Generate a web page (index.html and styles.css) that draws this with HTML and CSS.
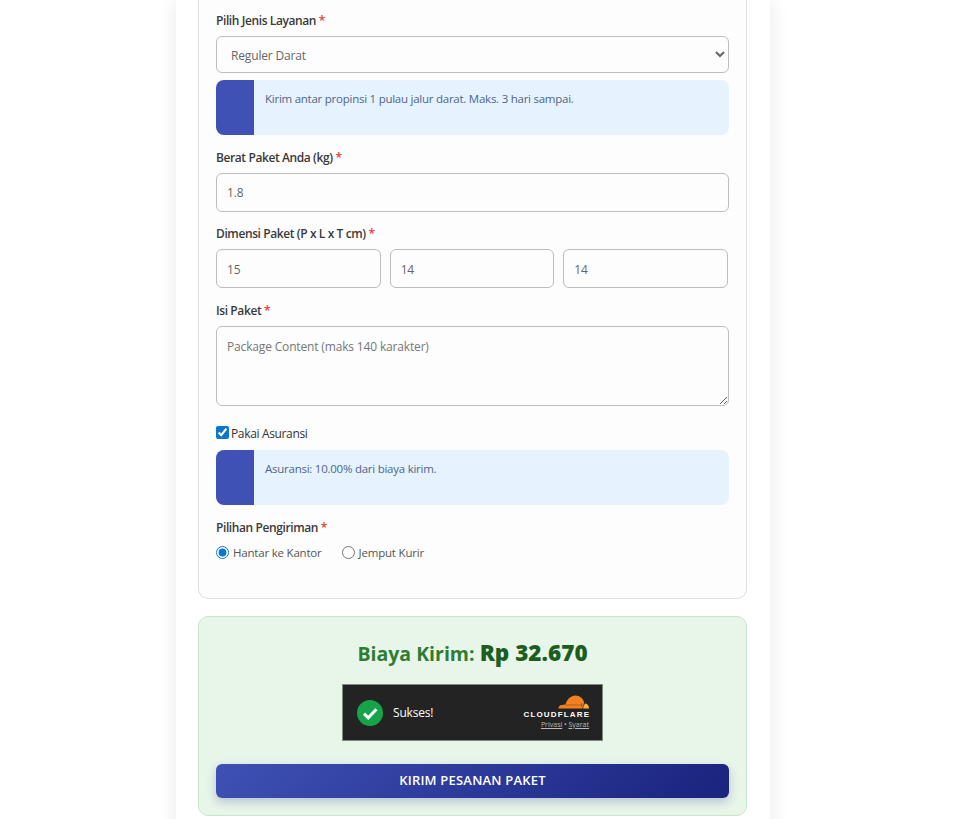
FILE: index.html
```html
<!DOCTYPE html>
<html lang="id">
<head>
<meta charset="utf-8">
<title>Kirim Paket</title>
<link rel="stylesheet" href="styles.css">
</head>
<body>
<div class="page">
  <main class="sheet">
    <form class="card">
      <label class="lbl" for="layanan">Pilih Jenis Layanan <span class="req">*</span></label>
      <select class="field sel" id="layanan"><option>Reguler Darat</option></select>
      <div class="info">Kirim antar propinsi 1 pulau jalur darat. Maks. 3 hari sampai.</div>

      <label class="lbl gap" for="berat">Berat Paket Anda (kg) <span class="req">*</span></label>
      <input class="field" id="berat" type="text" value="1.8">

      <label class="lbl gap">Dimensi Paket (P x L x T cm) <span class="req">*</span></label>
      <div class="dims">
        <input class="field" type="text" value="15">
        <input class="field" type="text" value="14">
        <input class="field" type="text" value="14">
      </div>

      <label class="lbl gap" for="isi">Isi Paket <span class="req">*</span></label>
      <textarea class="field area" id="isi" placeholder="Package Content (maks 140 karakter)"></textarea>

      <label class="check"><input type="checkbox" checked><span class="check-text">Pakai Asuransi</span></label>
      <div class="info info-after">Asuransi: 10.00% dari biaya kirim.</div>

      <div class="lbl gap">Pilihan Pengiriman <span class="req">*</span></div>
      <div class="radios">
        <label class="radio"><input type="radio" name="kirim" checked>Hantar ke Kantor</label>
        <label class="radio"><input type="radio" name="kirim">Jemput Kurir</label>
      </div>
    </form>

    <section class="total">
      <h2 class="cost">Biaya Kirim: <strong>Rp 32.670</strong></h2>
      <div class="turnstile">
        <svg class="ok" viewBox="0 0 26 26" width="26" height="26" aria-hidden="true">
          <circle cx="13" cy="13" r="13" fill="#16a34a"/>
          <path d="M7 13.6l4.2 4.2L19.4 9.2" fill="none" stroke="#fff" stroke-width="3"/>
        </svg>
        <span class="ok-text">Sukses!</span>
        <div class="cf">
          <svg class="cloud" viewBox="0 0 62 28" width="31" height="14" aria-hidden="true">
            <path d="M1 27C1 22 5 19 9 20 11 19 13 18.500 15 19 18 8 26 1 35 1 44 1 50 7 52 14 52 19 50 24 48 27z" fill="#f38020"/>
            <path d="M50 27C51 23 52 20 54 17 59 17 62 22 62 27z" fill="#faae40"/>
            <path d="M14 20H50M47 16V24" stroke="#3a2410" stroke-width="1" stroke-opacity=".7" fill="none"/>
          </svg>
          <span class="cf-name">CLOUDFLARE</span>
          <span class="cf-links"><a href="#">Privasi</a> • <a href="#">Syarat</a></span>
        </div>
      </div>
      <button class="send" type="button">KIRIM PESANAN PAKET</button>
    </section>
  </main>
</div>
</body>
</html>
```
FILE: styles.css
```css
* { box-sizing: border-box; }
html, body { margin: 0; height: 819px; overflow: hidden; background: #fff; }
body { font-family: "Open Sans", "Noto Sans", sans-serif; color: #333; }
.page { width: 946px; display: flex; justify-content: center; }
.sheet {
  width: 594px; height: 860px; padding: 0 23px 0 22px; background: #fff;
  box-shadow: 0 0 20px rgba(0, 0, 0, .09);
}
.card {
  display: flex; flex-direction: column;
  height: 599px; padding: 12px 17px 0; background: #fdfdfd;
  border: 1px solid #e0e0e0; border-top: 0; border-radius: 0 0 10px 10px;
}
.lbl { display: block; height: 18px; margin-bottom: 6px; font-size: 12px; line-height: 18px; font-weight: 600; color: #3a3a3a; letter-spacing: -.4px; }
.gap { margin-top: 13.500px; }
.req { color: #e53935; }
.field {
  display: block; width: 100%; height: 39px; padding: 1px 10px 0;
  border: 1px solid #bdbdbd; border-radius: 6px; background: #fdfdfd;
  font: 12px "Open Sans", "Noto Sans", sans-serif; letter-spacing: -.16px; color: #666;
}
.sel { height: 37px; }
.dims { display: grid; grid-template-columns: repeat(3, 1fr); gap: 9px; margin-right: 1px; }
.area { height: 80px; padding: 11px 10px 10px; }
.area::placeholder { color: #777; }
.info {
  height: 55px; margin-top: 7px; padding: 10px 11px; border-left: 38px solid #3f51b5; border-radius: 8px;
  background: #e6f3ff; font-size: 11.500px; line-height: 18px; color: #4f6488; letter-spacing: -.25px;
}
.info-after { margin-top: 8.500px; }
.check { display: flex; align-items: center; height: 18px; margin-top: 18px; font-size: 12px; letter-spacing: -.35px; color: #333; }
.check input { width: 13px; height: 13px; margin: 0 2px 0 0; accent-color: #0b76cf; }
.check-text { padding-top: 2px; }
.radios { display: flex; gap: 20px; height: 18px; margin-top: 1px; }
.radio { display: flex; align-items: center; font-size: 11.500px; letter-spacing: -.2px; color: #555; }
.radio input { width: 13px; height: 13px; margin: 0 4px 0 0; accent-color: #0b76cf; }
.total {
  display: flex; flex-direction: column; align-items: center;
  height: 200px; margin-top: 17px; padding: 0 17px; background: #e8f5e9;
  border: 1px solid #c8e6c9; border-radius: 10px;
}
.cost { height: 30px; margin: 22px 0 0; font-size: 19.500px; line-height: 30px; font-weight: 700; color: #2e7d32; }
.cost strong { font-size: 22.500px; line-height: 1; color: #1b5e20; }
.turnstile {
  flex: none; display: flex; align-items: center; width: 261px; height: 57px; margin-top: 15px; padding: 0 13px 0 14px;
  background: #232323; border: 1px solid #7d8a7e;
}
.ok { flex: none; }
.ok-text { margin-left: 10px; font-size: 12px; color: #fff; letter-spacing: -.2px; }
.cf { display: flex; flex-direction: column; align-items: flex-end; margin-left: auto; margin-bottom: 2px; }
.cloud { display: block; }
.cf-name { margin: 1px -1.150px 0 0; font: 700 8px/9px "Liberation Sans", sans-serif; letter-spacing: 1.150px; color: #fff; }
.cf-links { margin-top: 2px; font-size: 7px; line-height: 8px; color: #bbb; }
.cf-links a { color: #bbb; }
.send {
  flex: none; width: 100%; height: 33.500px; margin-top: 23px; padding: 0 0 2px; border: 0; border-radius: 6px;
  background: linear-gradient(135deg, #3f51b5, #1a237e);
  box-shadow: 0 4px 10px rgba(40, 53, 147, .25);
  font: 600 13px "Open Sans", "Noto Sans", sans-serif; letter-spacing: .2px; color: #fff;
}
```
